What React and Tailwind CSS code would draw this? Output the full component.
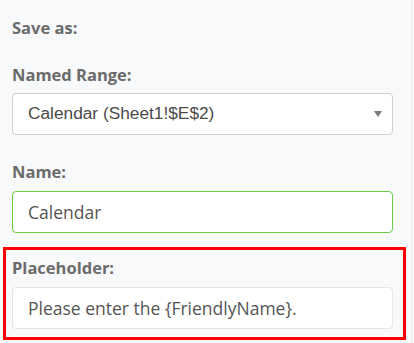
import React from "react";

const labelCls =
  "block h-[20px] leading-[20px] text-[16.5px] font-bold text-[#6b6b6b] font-['Open_Sans',sans-serif]";

export default function App() {
  return (
    <div className="w-[414px] h-[343px] bg-[#f8f9fa] overflow-hidden">
      <div className="w-[412px] h-[343px] border-r border-[#e9eaec] pt-[18px]">
        <div className="px-[12px]">
          <div className={labelCls}>Save as:</div>
          <div className={labelCls + " mt-[27px]"}>Named Range:</div>
          <div className="mt-[8px] w-[381px] h-[42px] bg-white border border-[#cfcfcf] rounded-[4px] flex items-center pl-[15px] pr-[9px]">
            <span className="flex-1 text-[17.3px] text-[#4a4a4a] font-['Liberation_Sans',Arial,sans-serif]">
              Calendar (Sheet1!$E$2)
            </span>
            <svg width="8" height="6" viewBox="0 0 8 6" className="mr-[1px]">
              <polygon points="0,0 8,0 4,6" fill="#7a7a7a" />
            </svg>
          </div>
          <div className={labelCls + " mt-[27px]"}>Name:</div>
          <div className="mt-[9px] w-[381px] h-[42px] bg-white border border-[#6ccb3e] rounded-[4px] flex items-center pl-[15px]">
            <span className="text-[17.5px] text-[#555] font-['Open_Sans',sans-serif]">Calendar</span>
          </div>
        </div>
        <div className="mt-[14px] ml-[3px] w-[403px] border-[3px] border-[#ff0000] pl-[6px] pt-[8px] pb-[8px]">
          <div className={labelCls}>Placeholder:</div>
          <div className="mt-[9px] w-[381px] h-[42px] bg-white border border-[#e6e6e6] rounded-[4px] flex items-center pl-[15px]">
            <span className="text-[17.5px] text-[#555] font-['Open_Sans',sans-serif]">
              Please enter the {"{FriendlyName}"}.
            </span>
          </div>
        </div>
      </div>
    </div>
  );
}
